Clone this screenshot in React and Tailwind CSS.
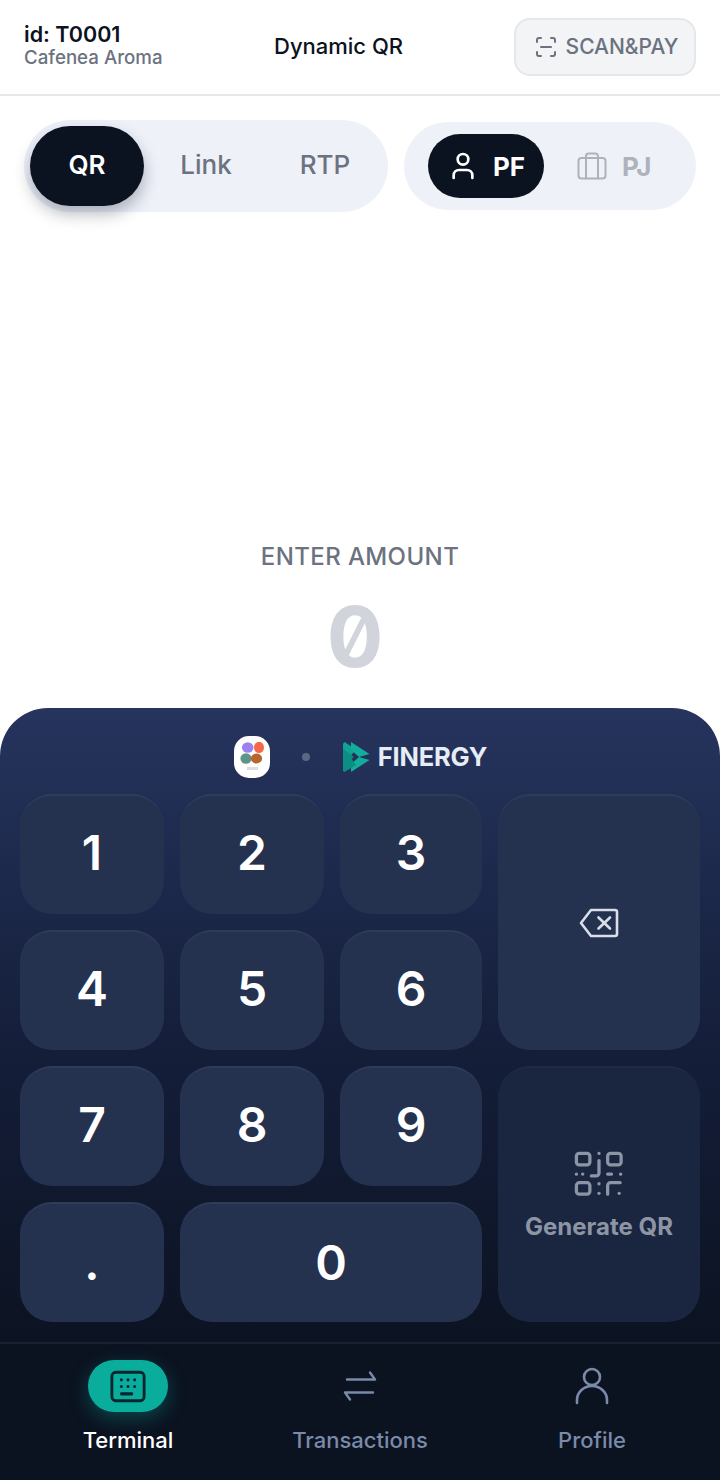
import { User } from 'lucide-react';

const INTER = 'font-["Inter",sans-serif]';

function ScanIcon() {
  return (
    <svg width="24" height="24" viewBox="0 0 24 24" fill="none" stroke="currentColor" strokeWidth="2" strokeLinecap="round" strokeLinejoin="round">
      <path d="M3 7V5a2 2 0 0 1 2-2h2" />
      <path d="M17 3h2a2 2 0 0 1 2 2v2" />
      <path d="M21 17v2a2 2 0 0 1-2 2h-2" />
      <path d="M7 21H5a2 2 0 0 1-2-2v-2" />
      <path d="M7 12h10" />
    </svg>
  );
}

function BriefcaseIcon() {
  return (
    <svg width="30" height="28" viewBox="0 0 30 28" fill="none" stroke="#adb2bb" strokeWidth="2" strokeLinecap="round" strokeLinejoin="round">
      <rect x="1.5" y="6" width="27" height="20.5" rx="3" />
      <path d="M9 6V4a2.5 2.5 0 0 1 2.5-2.5h7A2.5 2.5 0 0 1 21 4v2" />
      <path d="M9 6v20.5" />
      <path d="M21 6v20.5" />
    </svg>
  );
}

function BackspaceIcon() {
  return (
    <svg width="40" height="30" viewBox="0 0 40 30" fill="none" stroke="#d9dfe8" strokeWidth="2.6" strokeLinecap="round" strokeLinejoin="round">
      <path d="M12 2h24a2 2 0 0 1 2 2v22a2 2 0 0 1-2 2H12L2 15Z" />
      <path d="M19.5 9.5 31 20.5" />
      <path d="M31 9.5 19.5 20.5" />
    </svg>
  );
}

function QrIcon() {
  return (
    <svg width="50" height="50" viewBox="0 0 52 50" fill="none" stroke="#8d95a5" strokeWidth="3.4" strokeLinecap="round" strokeLinejoin="round">
      <rect x="2.5" y="2.5" width="14" height="12" rx="3" />
      <rect x="35" y="2.5" width="14" height="12" rx="3" />
      <rect x="2.5" y="33" width="14" height="12" rx="3" />
      <path d="M26 2.5v.1" />
      <path d="M26 10v13a3 3 0 0 1-3 3h-5" />
      <path d="M2.5 24v.1" />
      <path d="M9 24h.1" />
      <path d="M35 24h4" />
      <path d="M48.5 24v.1" />
      <path d="M26 34v.1" />
      <path d="M26 44v.1" />
      <path d="M35 45V36a3 3 0 0 1 3-3h10" />
      <path d="M47 44v.1" />
    </svg>
  );
}

function TerminalIcon() {
  return (
    <svg width="36" height="33" viewBox="0 0 38 34" fill="none">
      <rect x="2" y="2" width="34" height="30" rx="4" stroke="#06262f" strokeWidth="3" />
      <g fill="#06262f">
        <circle cx="12" cy="10" r="1.6" />
        <circle cx="19" cy="10" r="1.6" />
        <circle cx="26" cy="10" r="1.6" />
        <circle cx="12" cy="17" r="1.6" />
        <circle cx="19" cy="17" r="1.6" />
        <circle cx="26" cy="17" r="1.6" />
        <rect x="10.5" y="23" width="14" height="3.4" rx="1.5" />
      </g>
    </svg>
  );
}

function TransferIcon() {
  return (
    <svg width="36" height="36" viewBox="0 0 36 36" fill="none" stroke="#7a8aa8" strokeWidth="2.4" strokeLinecap="round" strokeLinejoin="round">
      <path d="M5 11.5h28l-5-7" />
      <path d="M31 24.5H3l5 7" />
    </svg>
  );
}

function ProfileIcon() {
  return (
    <svg width="36" height="38" viewBox="0 0 36 38" fill="none" stroke="#7a8aa8" strokeWidth="2.6" strokeLinecap="round">
      <circle cx="18" cy="10" r="8" />
      <path d="M3 36v-3c0-8 7-14 15-14s15 6 15 14v3" />
    </svg>
  );
}

function Logos() {
  return (
    <div className="flex h-[86px] items-center justify-center pt-3 pl-[1px]">
      {/* merchant app tile */}
      <div className="flex h-[42px] w-9 flex-col items-center rounded-[15px] bg-white pt-[6px]">
        <svg width="26" height="30" viewBox="0 0 26 30">
          <ellipse cx="8.7" cy="5.5" rx="5.8" ry="5.2" fill="#9b82f0" />
          <ellipse cx="20" cy="5.5" rx="5" ry="5.6" fill="#f5694a" />
          <ellipse cx="7" cy="16.5" rx="5.6" ry="5.2" fill="#5f9488" />
          <ellipse cx="17.5" cy="16.5" rx="5.6" ry="5" fill="#b7662d" />
          <rect x="8" y="25" width="11" height="3" fill="#dcdee2" />
        </svg>
      </div>
      <div className="mr-[33px] ml-[32px] h-2 w-2 rounded-full bg-[#5b6784]" />
      <div className="flex items-center gap-2">
        <svg width="27" height="32" viewBox="0 0 27 32">
          <path d="M0 2.5 1.5 1 13 8.5 8 14.5 0 11Z" fill="#0fa394" />
          <path d="M8 1 26.5 13 16 16 8 9Z" fill="#12ad9c" />
          <path d="M8 31 26.5 19 16 16 8 23Z" fill="#12ad9c" />
          <path d="M0 21 8 17 13 24 1.5 31 0 30Z" fill="#0b8f84" />
          <path d="M0 8 11 16 0 24Z" fill="#0b8f84" />
        </svg>
        <span className={`${INTER} text-[25.5px] font-bold tracking-[-0.2px] text-[#e6edf6]`}>FINERGY</span>
      </div>
    </div>
  );
}

function Key({ children, className = '' }) {
  return (
    <button className={`flex items-center justify-center rounded-[32px] border-t-2 border-[#2f3c59] bg-[#25324f] ${className}`}>
      {children}
    </button>
  );
}

function Keypad() {
  const digits = ['1', '2', '3', '4', '5', '6', '7', '8', '9'];
  const digitStyle = `${INTER} pb-1 text-[48px] font-semibold text-white`;
  return (
    <div className="grid grid-cols-[144px_144px_142px_202px] grid-rows-[120px_120px_120px_120px] gap-4 px-5">
      {digits.slice(0, 3).map((d) => (
        <Key key={d} className={digitStyle}>{d}</Key>
      ))}
      <Key className="row-span-2">
        <BackspaceIcon />
      </Key>
      {digits.slice(3, 6).map((d) => (
        <Key key={d} className={digitStyle}>{d}</Key>
      ))}
      {digits.slice(6).map((d) => (
        <Key key={d} className={digitStyle}>{d}</Key>
      ))}
      <button className="row-span-2 flex flex-col items-center justify-center gap-[9px] rounded-[32px] border-t-2 border-[#1f2b45] bg-[#1a2640] pt-2 pb-[3px]">
        <QrIcon />
        <span className={`${INTER} text-[24px] font-bold text-[#8d95a5]`}>Generate QR</span>
      </button>
      <Key className={`${INTER} text-[48px] font-semibold text-white`}>.</Key>
      <Key className={`${INTER} col-span-2 text-[48px] font-semibold text-white`}>0</Key>
    </div>
  );
}

function BottomNav() {
  return (
    <nav className={`${INTER} mt-5 grid h-[138px] grid-cols-3 border-t-2 border-[#1a2230] bg-[#0b1220] px-3 pt-4`}>
      <div className="flex flex-col items-center">
        <div className="flex h-[52px] w-20 items-center justify-center rounded-[26px] bg-[#0aad9c] shadow-[0_6px_20px_rgba(10,173,156,0.35)]">
          <TerminalIcon />
        </div>
        <span className="mt-3 text-[22px] font-medium text-white">Terminal</span>
      </div>
      <div className="flex flex-col items-center">
        <div className="flex h-[52px] items-center justify-center"><TransferIcon /></div>
        <span className="mt-3 text-[22px] font-medium text-[#7a8aa8]">Transactions</span>
      </div>
      <div className="flex flex-col items-center">
        <div className="flex h-[52px] items-center justify-center"><ProfileIcon /></div>
        <span className="mt-3 text-[22px] font-medium text-[#7a8aa8]">Profile</span>
      </div>
    </nav>
  );
}

export default function App() {
  return (
    <div className={`${INTER} flex h-[1480px] w-[720px] flex-col overflow-hidden bg-white`}>
      <header className="flex h-[96px] items-center border-b-2 border-[#e5e7eb] px-6">
        <div className="w-[250px] pb-[4px]">
          <div className="text-[21.5px] leading-[25px] font-semibold text-[#0b1220]">id: T0001</div>
          <div className="text-[18.7px] leading-[22px] font-medium text-[#6b7280]">Cafenea Aroma</div>
        </div>
        <div className="pb-[2px] text-[22px] font-medium text-[#0b1220]">Dynamic QR</div>
        <button className="ml-auto flex h-[58px] w-[182px] items-center justify-center gap-2 rounded-2xl border-2 border-[#e5e7eb] bg-[#f3f4f6] pl-[2px] text-[21px] font-medium text-[#6b7280]">
          <ScanIcon />
          SCAN&amp;PAY
        </button>
      </header>

      <div className="flex items-center gap-4 pt-6 pl-6">
        <div className="flex h-[92px] w-[364px] items-center rounded-[46px] bg-[#eef1f8] pl-[6px] text-[26px] leading-[36px] font-semibold">
          <div className="flex h-20 w-[114px] items-center justify-center rounded-[40px] bg-[#0b1220] pb-[2px] text-white shadow-[0_8px_16px_rgba(15,23,42,0.3)]">QR</div>
          <div className="w-[124px] pb-[2px] text-center font-medium text-[#6b7280]">Link</div>
          <div className="w-[114px] pb-[2px] text-center font-medium text-[#6b7280]">RTP</div>
        </div>
        <div className="flex h-[88px] w-[292px] items-center rounded-[44px] bg-[#eef1f8] pl-6 text-[26px] font-bold">
          <div className="flex h-16 w-[116px] items-center justify-center gap-[14px] rounded-[32px] bg-[#0b1220] text-white">
            <User size={32} strokeWidth={2} />
            PF
          </div>
          <div className="ml-[33px] flex items-center gap-[15px] text-[#adb2bb]">
            <BriefcaseIcon />
            PJ
          </div>
        </div>
      </div>

      <main className="flex flex-1 flex-col items-center justify-end pb-[21px]">
        <div className="text-[24px] font-medium tracking-[0.4px] text-[#6b7280]">ENTER AMOUNT</div>
        <div className="mt-3 mr-[10px] text-[84px] leading-[100px] font-bold text-[#d1d5db] slashed-zero">0</div>
      </main>

      <section className="rounded-t-[48px] bg-gradient-to-b from-[#26345e] via-[#141e39] via-45% to-[#0b1220] to-[85%]">
        <Logos />
        <Keypad />
        <BottomNav />
      </section>
    </div>
  );
}
